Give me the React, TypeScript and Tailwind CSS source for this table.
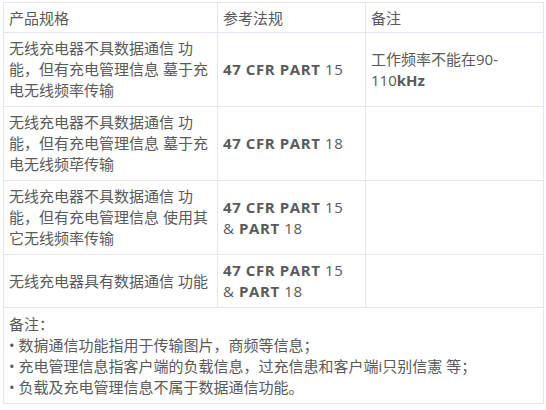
export default function App() {
  const font = { fontFamily: "'Open Sans', 'Noto Sans CJK SC', sans-serif" };
  const cell = 'border border-[#e1e8ef] px-[5px] py-[5px] align-middle';
  const rows = [
    {
      spec: '无线充电器不具数据通信 功能，但有充电管理信息 墓于充电无线频率传输',
      law: (
        <>
          <b>47 CFR PART</b> 15
        </>
      ),
      note: (
        <>
          工作频率不能在90-110<b>kHz</b>
        </>
      ),
    },
    {
      spec: '无线充电器不具数据通信 功能，但有充电管理信息 墓于充电无线频荜传输',
      law: (
        <>
          <b>47 CFR PART</b> 18
        </>
      ),
      note: null,
    },
    {
      spec: '无线充电器不具数据通信 功能，但有充电管理信息 使用其它无线频率传输',
      law: (
        <>
          <b>47 CFR PART</b> 15
          <br />
          &amp; <b>PART</b> 18
        </>
      ),
      note: null,
    },
    {
      spec: '无线充电器具有数据通信 功能',
      law: (
        <>
          <b>47 CFR PART</b> 15
          <br />
          &amp; <b>PART</b> 18
        </>
      ),
      note: null,
    },
  ];

  return (
    <div className="w-[546px] h-[410px] bg-white pt-[2px] pl-[3px]" style={font}>
      <table className="table-fixed border-collapse w-[540px] text-[15px] leading-[21px] text-[#5a5a5a]">
        <colgroup>
          <col className="w-[214px]" />
          <col className="w-[148px]" />
          <col className="w-[178px]" />
        </colgroup>
        <thead>
          <tr>
            <th className="border border-[#e1e8ef] px-[5px] pt-[5px] pb-[3px] text-left font-normal">产品规格</th>
            <th className="border border-[#e1e8ef] px-[5px] pt-[5px] pb-[3px] text-left font-normal">参考法规</th>
            <th className="border border-[#e1e8ef] px-[5px] pt-[5px] pb-[3px] text-left font-normal">备注</th>
          </tr>
        </thead>
        <tbody>
          {rows.map((r, i) => (
            <tr key={i}>
              <td className={cell}>{r.spec}</td>
              <td className={`${cell} tracking-[0.6px]`}>{r.law}</td>
              <td className={cell}>{r.note}</td>
            </tr>
          ))}
          <tr>
            <td colSpan={3} className="border border-[#e1e8ef] px-[5px] pt-[6px] pb-[5px]">
              <div>备注：</div>
              <div>• 数掮通信功能指用于传输图片，商频等信息；</div>
              <div>• 充电管理信息指客户端的负载信息，过充信患和客户端i只别信憲 等；</div>
              <div>• 负载及充电管理信息不属于数据通信功能。</div>
            </td>
          </tr>
        </tbody>
      </table>
    </div>
  );
}
